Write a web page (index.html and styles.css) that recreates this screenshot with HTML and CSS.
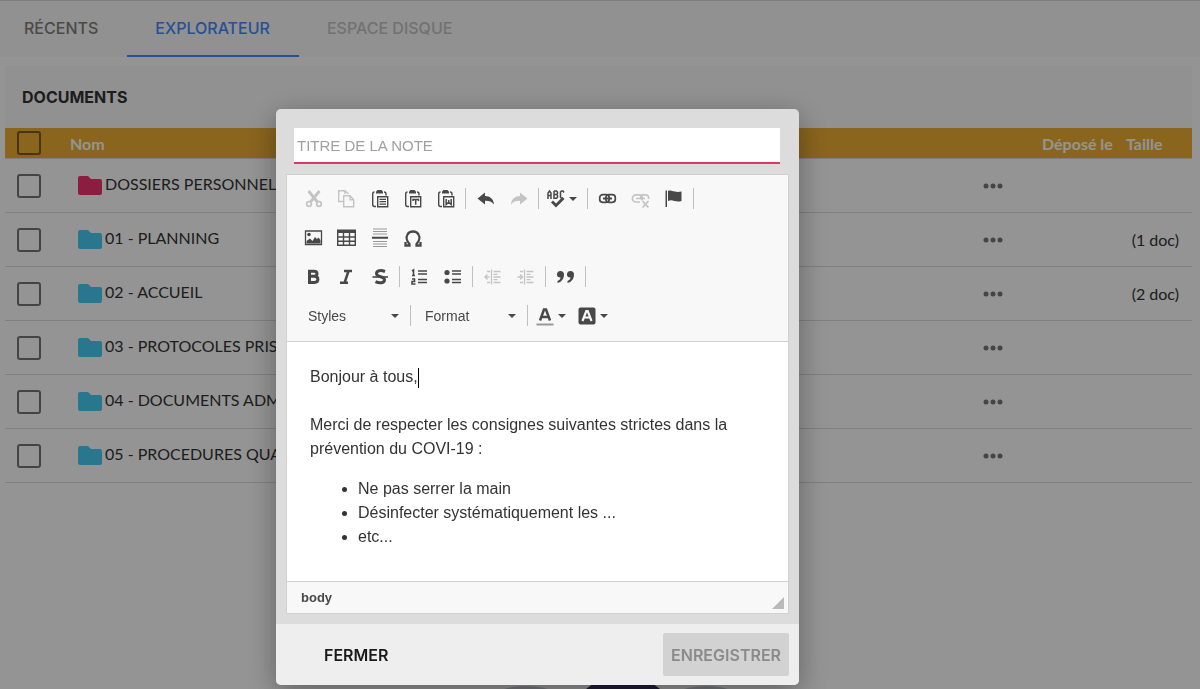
FILE: index.html
```html
<!DOCTYPE html>
<html lang="fr">
  <head>
    <meta charset="UTF-8" />
    <meta name="viewport" content="width=device-width, initial-scale=1.0" />
    <title>Documents</title>
    <link rel="stylesheet" href="styles.css">
  </head>
  <body>
    <svg class="sprite" aria-hidden="true">
      <symbol id="folder" viewBox="0 0 24 20">
        <path d="M2 0h8l3 3h9a2 2 0 0 1 2 2v12a2 2 0 0 1-2 2H2a2 2 0 0 1-2-2V2a2 2 0 0 1 2-2z" />
      </symbol>
      <symbol id="dots" viewBox="0 0 20 6">
        <circle cx="3" cy="3" r="2.5" /><circle cx="10" cy="3" r="2.5" /><circle cx="17" cy="3" r="2.5" />
      </symbol>
      <symbol id="clipboard" viewBox="0 0 20 20">
        <path d="M4.500 3C3 3 2.700 3.500 2.700 5v10.500c0 1.500.3 2 1.800 2H6M14 3c1.500 0 2 .5 2 2v1.500" fill="none" stroke="currentColor" stroke-width="1.400" />
        <path d="M6 4.500V2.800L7.500 1h4L13 2.800v1.700z" />
        <path d="M7.700 7.700h10v10h-10z" fill="#f8f8f8" stroke="currentColor" stroke-width="1.400" />
      </symbol>
    </svg>

    <nav class="tabs">
      <a class="tab" href="#">RÉCENTS</a>
      <a class="tab active" href="#">EXPLORATEUR</a>
      <a class="tab disabled" href="#">ESPACE DISQUE</a>
    </nav>

    <main class="panel">
      <h1>DOCUMENTS</h1>
      <table class="files">
        <thead>
          <tr>
            <th class="col-check"><input type="checkbox" aria-label="Tout sélectionner" /></th>
            <th>Nom</th>
            <th class="col-menu"></th>
            <th class="col-date">Déposé le</th>
            <th class="col-size">Taille</th>
          </tr>
        </thead>
        <tbody>
          <tr>
            <td><input type="checkbox" id="f0" /></td>
            <td><label class="file personal" for="f0"><svg><use href="#folder" /></svg><span>DOSSIERS PERSONNELS</span></label></td>
            <td class="col-menu"><button aria-label="Actions"><svg><use href="#dots" /></svg></button></td>
            <td></td>
            <td class="size"></td>
          </tr>
          <tr>
            <td><input type="checkbox" id="f1" /></td>
            <td><label class="file" for="f1"><svg><use href="#folder" /></svg><span>01 - PLANNING</span></label></td>
            <td class="col-menu"><button aria-label="Actions"><svg><use href="#dots" /></svg></button></td>
            <td></td>
            <td class="size">(1 doc)</td>
          </tr>
          <tr>
            <td><input type="checkbox" id="f2" /></td>
            <td><label class="file" for="f2"><svg><use href="#folder" /></svg><span>02 - ACCUEIL</span></label></td>
            <td class="col-menu"><button aria-label="Actions"><svg><use href="#dots" /></svg></button></td>
            <td></td>
            <td class="size">(2 doc)</td>
          </tr>
          <tr>
            <td><input type="checkbox" id="f3" /></td>
            <td><label class="file" for="f3"><svg><use href="#folder" /></svg><span>03 - PROTOCOLES PRIS</span></label></td>
            <td class="col-menu"><button aria-label="Actions"><svg><use href="#dots" /></svg></button></td>
            <td></td>
            <td class="size"></td>
          </tr>
          <tr>
            <td><input type="checkbox" id="f4" /></td>
            <td><label class="file" for="f4"><svg><use href="#folder" /></svg><span>04 - DOCUMENTS ADMI</span></label></td>
            <td class="col-menu"><button aria-label="Actions"><svg><use href="#dots" /></svg></button></td>
            <td></td>
            <td class="size"></td>
          </tr>
          <tr>
            <td><input type="checkbox" id="f5" /></td>
            <td><label class="file" for="f5"><svg><use href="#folder" /></svg><span>05 - PROCEDURES QUA</span></label></td>
            <td class="col-menu"><button aria-label="Actions"><svg><use href="#dots" /></svg></button></td>
            <td></td>
            <td class="size"></td>
          </tr>
        </tbody>
      </table>
    </main>

    <svg class="illustration" viewBox="0 0 240 8" aria-hidden="true">
      <path d="M82 8l8-6h58l8 6z" fill="#35305a" />
      <path d="M0 8c14-4 30-4 44 0M180 8c14-4 30-4 44 0" fill="#c4cfd4" />
    </svg>

    <div class="overlay">
      <div class="modal" role="dialog" aria-label="Note">
        <div class="modal-body">
          <input class="note-title" type="text" placeholder="TITRE DE LA NOTE" aria-label="Titre de la note" />

          <div class="editor">
            <div class="toolbar">
              <div class="tools">
                <button class="off" title="Couper"><svg viewBox="0 0 20 20"><path d="M4.500 2l9 11M15.500 2l-9 11" fill="none" stroke="currentColor" stroke-width="2.800" /><circle cx="5" cy="15" r="2.300" fill="none" stroke="currentColor" stroke-width="1.800" /><circle cx="15" cy="15" r="2.300" fill="none" stroke="currentColor" stroke-width="1.800" /></svg></button>
                <button class="off" title="Copier"><svg viewBox="0 0 20 20"><path d="M6 12.500H1.700V1.700H8L11.500 5M8 1.700V5" fill="none" stroke="currentColor" stroke-width="1.400" /><path d="M6.700 6.700H13l3.700 4v7h-10zM13 6.700v4h4" fill="none" stroke="currentColor" stroke-width="1.400" /></svg></button>
                <button title="Coller"><svg viewBox="0 0 20 20"><use href="#clipboard" /><path d="M9.500 10.300h6.500M9.500 12.700h6.500M9.500 15.100h6.500" stroke="currentColor" stroke-width="1.300" /></svg></button>
                <button title="Coller comme texte"><svg viewBox="0 0 20 20"><use href="#clipboard" /><path d="M10 12v-1.500h5.500V12M12.700 10.500v5.300" fill="none" stroke="currentColor" stroke-width="1.500" /></svg></button>
                <button title="Coller depuis Word"><svg viewBox="0 0 20 20"><use href="#clipboard" /><path d="M10.200 10v5.500l2.500-2.300 2.500 2.300V10M12.700 11v3" fill="none" stroke="currentColor" stroke-width="1.500" /></svg></button>
                <span class="sep"></span>
                <button title="Annuler"><svg viewBox="0 0 20 20"><path d="M1.500 9.500L9 3.500v3.600c5 0 8.500 2.900 9 8.400-2.200-3-5-3.800-9-3.700v3.700z" /></svg></button>
                <button class="off" title="Rétablir"><svg viewBox="0 0 20 20"><path d="M18.500 9.500L11 3.500v3.600c-5 0-8.500 2.900-9 8.400 2.200-3 5-3.800 9-3.700v3.700z" /></svg></button>
                <span class="sep"></span>
                <button class="menu" title="Orthographe"><svg viewBox="0 0 20 20"><path d="M2 10V4l1.500-2L5 4v6M2 6.500h3M8 2v7.300h2.500l1-1V6.500l-1-1H8h2.500l1-1V3l-1-1H8M18 3.500L17 2h-1.500l-1 1v5.300l1 1H17" fill="none" stroke="currentColor" stroke-width="1.500" /><path d="M6 12.500l4 4L17.500 9" fill="none" stroke="currentColor" stroke-width="2.800" /></svg></button>
                <span class="sep"></span>
                <button title="Lien"><svg viewBox="0 0 20 20"><rect x="1.700" y="5.700" width="9.500" height="7.600" rx="3" fill="none" stroke="currentColor" stroke-width="1.700" /><rect x="7.800" y="5.700" width="9.500" height="7.600" rx="3" fill="none" stroke="currentColor" stroke-width="1.700" /><path d="M5 9.500h9" stroke="currentColor" stroke-width="1.800" /></svg></button>
                <button class="off" title="Supprimer le lien"><svg viewBox="0 0 20 20"><path d="M9 13H5a3.500 3.500 0 0 1 0-7.200h3c4 0 4 4.500 2 5.200M10 9c-1-1.500 0-3.200 2-3.200h2.500c2.500 0 3.500 2 3 4.200M5 9.500h9" fill="none" stroke="currentColor" stroke-width="1.700" /><path d="M11.500 12l6 6.500M17.500 12l-6 6.500" stroke="currentColor" stroke-width="1.800" /></svg></button>
                <button title="Ancre"><svg viewBox="0 0 20 20"><path d="M1.500 1.500H3V18H1.500zM4 2c4-1.500 5.500 2 13.500.5V12C11 14 9 9.500 4 12z" /></svg></button>
                <span class="sep"></span>
              </div>
              <div class="tools">
                <button title="Image"><svg viewBox="0 0 20 20"><path d="M1.500 3h16v13.500h-16z" fill="none" stroke="currentColor" stroke-width="1.300" /><circle cx="5" cy="6.500" r="1.800" /><path d="M2.500 15.500V13l3.500-2.500L8.500 13l2.500-4 2 2 1.500-1.500 2 2.500v3.500z" /></svg></button>
                <button title="Tableau"><svg viewBox="0 0 20 20"><path d="M0 1.500h19V5H0z" /><path d="M.7 2v15.300h17.600V2M1 9h17.500M1 13.200h17.500M6.500 5v12.500M12.500 5v12.500" fill="none" stroke="currentColor" stroke-width="1.400" /></svg></button>
                <button title="Ligne horizontale"><svg viewBox="0 0 20 20"><path d="M3 1h14M3 3.500h14M3 6h14M3 13.500h14M3 16h14M3 18.500h14" stroke="#999" stroke-width="1.200" /><path d="M2 9.800h16" stroke="currentColor" stroke-width="2" /></svg></button>
                <button title="Caractère spécial"><svg viewBox="0 0 20 20"><path d="M2.500 14v3.500h4V16C3.500 13 3 9 4.500 6.500c2-4 9-4 11 0C17 9 16.500 13 13.500 16v1.500h4V14" fill="none" stroke="currentColor" stroke-width="2.300" /></svg></button>
              </div>
              <div class="tools">
                <button title="Gras"><svg viewBox="0 0 20 20"><path d="M5.500 4.200H10c4 0 4 5 0 5H5.500h5c4.500 0 4.500 6.300 0 6.300h-5z" fill="none" stroke="currentColor" stroke-width="3" /></svg></button>
                <button title="Italique"><svg viewBox="0 0 20 20"><path d="M7 4h8M3 15.800h8M11.500 4L7.500 16" fill="none" stroke="currentColor" stroke-width="2.500" /></svg></button>
                <button title="Barré"><svg viewBox="0 0 20 20"><path d="M15 4.500C11 3 6.500 3.300 6.500 6.500c0 4 8 2.500 8 6.200 0 3.500-5 3.800-9 2" fill="none" stroke="currentColor" stroke-width="3" /><path d="M2.500 10h15.500" stroke="currentColor" stroke-width="1.600" /></svg></button>
                <span class="sep"></span>
                <button title="Liste numérotée"><svg viewBox="0 0 20 20"><path d="M2 4l1.500-1v6M2 8.500h3M2 12h2.500v2.500H2V17h3.500" fill="none" stroke="currentColor" stroke-width="1.600" /><path d="M8 4h9M8 7h9M8 12.500h9M8 15.500h9" stroke="currentColor" stroke-width="1.400" /></svg></button>
                <button title="Liste à puces"><svg viewBox="0 0 20 20"><circle cx="4" cy="5.500" r="2.600" /><circle cx="4" cy="14" r="2.600" /><path d="M9 4h9M9 7h9M9 12.500h9M9 15.500h9" stroke="currentColor" stroke-width="1.400" /></svg></button>
                <span class="sep"></span>
                <button class="off" title="Diminuer le retrait"><svg viewBox="0 0 20 20"><path d="M1.500 10h5M4.500 7.500L2 10l2.500 2.500M8.500 2.500v15M10.500 4.500h7M10.500 7.300h4M10.500 10h7M10.500 12.700h4M10.500 15.500h7M4 4.500h3M4 15.500h3" fill="none" stroke="currentColor" stroke-width="1.300" /></svg></button>
                <button class="off" title="Augmenter le retrait"><svg viewBox="0 0 20 20"><path d="M1.500 10h5M4 7.500L6.500 10 4 12.500M8.500 2.500v15M10.500 4.500h7M10.500 7.300h4M10.500 10h7M10.500 12.700h4M10.500 15.500h7M4 4.500h3M4 15.500h3" fill="none" stroke="currentColor" stroke-width="1.300" /></svg></button>
                <span class="sep"></span>
                <button title="Citation"><svg viewBox="0 0 20 20"><path d="M4.500 4a3.300 3.300 0 0 1 3.500 3.500C8 12 5.500 15 1.500 16v-2c2-.8 3-2 3-3.500-5 0-4.500-6.500 0-6.500zM14.500 4A3.300 3.300 0 0 1 18 7.500c0 4.500-2.500 7.500-6.500 8.500v-2c2-.8 3-2 3-3.500-5 0-4.500-6.500 0-6.500z" /></svg></button>
                <span class="sep"></span>
              </div>
              <div class="tools">
                <span class="combo"><select aria-label="Styles"><option>Styles</option></select></span>
                <span class="sep"></span>
                <span class="combo"><select aria-label="Format"><option>Format</option></select></span>
                <span class="sep"></span>
                <button class="menu" title="Couleur du texte"><svg viewBox="0 0 20 20"><path d="M5 14.500l4-11h2l4 11M6.500 11h7" fill="none" stroke="currentColor" stroke-width="2.500" /><path d="M1.500 18.500h17" stroke="#999" stroke-width="2" /></svg></button>
                <button class="menu" title="Couleur d'arrière-plan"><svg viewBox="0 0 20 20"><rect x="1.500" y="1.500" width="17" height="17" rx="2" /><path d="M5.500 15L9.300 5h1.400l3.800 10M7 11.500h6" fill="none" stroke="#f8f8f8" stroke-width="2.200" /></svg></button>
              </div>
            </div>

            <div class="content" contenteditable="true" role="textbox" aria-label="Contenu de la note">
              <p>Bonjour à tous,<span class="cursor"></span><br /><br />Merci de respecter les consignes suivantes strictes dans la prévention du COVI-19 :</p>
              <ul>
                <li>Ne pas serrer la main</li>
                <li>Désinfecter systématiquement les ...</li>
                <li>etc...</li>
              </ul>
            </div>

            <div class="path">
              <span>body</span>
              <span class="resizer"></span>
            </div>
          </div>
        </div>

        <div class="modal-footer">
          <button class="btn">FERMER</button>
          <button class="btn save" disabled>ENREGISTRER</button>
        </div>
      </div>
    </div>
  </body>
</html>
```

FILE: styles.css
```css
* {
  box-sizing: border-box;
}

body {
  margin: 0;
  min-height: 100vh;
  overflow: hidden;
  background-color: #fff;
  color: #333;
  font-family: Inter, "Liberation Sans", sans-serif;
  font-size: 16px;
}

button {
  border: 0;
  padding: 0;
  background: none;
  font: inherit;
  cursor: pointer;
}

svg {
  display: block;
  fill: currentColor;
}

.sprite {
  position: absolute;
  width: 0;
  height: 0;
}

/* tabs */
.tabs {
  display: flex;
  height: 57px;
  border-top: 1px solid #d8d8d8;
  background-color: #fafafa;
}

.tab {
  display: flex;
  align-items: center;
  padding: 0 29px 0 28px;
  border-bottom: 2px solid transparent;
  color: #808080;
  font-weight: 500;
  text-decoration: none;
}

.tab:first-child {
  padding-left: 24px;
}

.tab.active {
  border-color: #448aff;
  color: #448aff;
}

.tab.disabled {
  color: #c4c4c4;
}

/* documents */
.panel {
  margin: 9px 8px 0 5px;
}

.panel h1 {
  margin: 0;
  padding: 0 17px;
  background-color: #fafafa;
  color: #333;
  font-size: 16px;
  font-weight: 700;
  line-height: 62px;
}

.files {
  width: 100%;
  border-collapse: separate;
  border-spacing: 0;
  table-layout: fixed;
  font-family: Lato, "Liberation Sans", sans-serif;
}

.files th,
.files td {
  height: 54px;
  padding: 0;
  border-bottom: 1px solid #dcdcdc;
  text-align: left;
}

.files th {
  height: 31px;
  background-color: #ecae35;
  color: #fff;
  font-weight: 700;
}

.files .col-check {
  width: 65px;
}

.files .col-menu {
  width: 98px;
}

.files .col-date {
  width: 84px;
}

.files .col-size {
  width: 66px;
}

.files .size {
  padding-right: 13px;
  text-align: right;
  white-space: nowrap;
}

.files input {
  display: block;
  appearance: none;
  width: 24px;
  height: 24px;
  margin: 0 0 0 12px;
  border: 2px solid #757575;
  border-radius: 3px;
}

.files th input {
  border-color: #7a5a1c;
}

.file {
  display: flex;
  align-items: center;
  gap: 3px;
  padding-left: 8px;
}

.file svg {
  flex: none;
  width: 24px;
  height: 20px;
  color: #48cbf6;
}

.file.personal svg {
  color: #f0356e;
}

.file span {
  padding-bottom: 4px;
}

.col-menu button {
  display: block;
  margin: 0 auto;
  color: #777;
}

.col-menu svg {
  width: 20px;
  height: 6px;
}

.illustration {
  position: absolute;
  bottom: 0;
  left: 42%;
  width: 240px;
  height: 8px;
}

/* note dialog */
.overlay {
  position: fixed;
  inset: 0;
  background-color: rgba(0, 0, 0, 0.42);
}

.modal {
  width: 523px;
  max-width: 100%;
  margin: 109px 0 0 23%;
  border-radius: 5px;
  background-color: #dcdcdc;
  box-shadow: 0 8px 30px rgba(0, 0, 0, 0.35);
  overflow: hidden;
}

.modal-body {
  padding: 19px 10px 10px;
}

.note-title {
  display: block;
  width: calc(100% - 17px);
  height: 36px;
  margin: 0 9px 10px 8px;
  padding: 0 3px;
  border: 0;
  border-bottom: 2px solid #e0356b;
  border-radius: 0;
  outline: 0;
  font-family: "Liberation Sans", Arial, sans-serif;
  font-size: 15px;
}

.note-title::placeholder {
  color: #a0a0a0;
}

.editor {
  border: 1px solid #d1d1d1;
  background-color: #fff;
  font-family: "Liberation Sans", Arial, sans-serif;
}

.toolbar {
  padding: 4px 10px 6px;
  border-bottom: 1px solid #d1d1d1;
  background-color: #f8f8f8;
}

.tools {
  display: flex;
  align-items: center;
  height: 39px;
}

.tools button {
  display: flex;
  align-items: center;
  justify-content: center;
  width: 33px;
  height: 32px;
  color: #484848;
}

.tools svg {
  width: 20px;
  height: 20px;
}

.tools .off {
  color: #c4c4c4;
}

.tools .menu {
  justify-content: flex-start;
  gap: 3px;
  width: 42px;
  padding-left: 4px;
}

.menu::after,
.combo::after {
  content: "";
  border: 4px solid transparent;
  border-top-color: #484848;
  border-bottom: 0;
}

.sep {
  width: 1px;
  height: 21px;
  margin: 0 3px;
  background-color: #c0c0c0;
}

.combo {
  display: flex;
  align-items: center;
  width: 110px;
  padding: 0 8px 0 11px;
}

.combo select {
  flex: 1;
  appearance: none;
  padding: 0;
  border: 0;
  background: none;
  color: #484848;
  font-family: inherit;
  font-size: 14px;
}

.content {
  padding: 23px 23px 32px;
  outline: 0;
  line-height: 24px;
}

.content p {
  margin: 0 0 16px;
}

.content ul {
  margin: 0;
  padding-left: 48px;
}

.cursor {
  display: inline-block;
  width: 1px;
  height: 20px;
  background-color: #000;
  vertical-align: middle;
}

.path {
  display: flex;
  align-items: center;
  justify-content: space-between;
  height: 32px;
  padding: 0 4px 0 14px;
  border-top: 1px solid #d1d1d1;
  background-color: #f8f8f8;
  color: #484848;
  font-size: 13px;
  font-weight: bold;
}

.resizer {
  align-self: flex-end;
  margin-bottom: 4px;
  border-bottom: 12px solid #bababa;
  border-left: 12px solid transparent;
}

.modal-footer {
  display: flex;
  align-items: center;
  justify-content: space-between;
  padding: 9px 10px 9px 42px;
  background-color: #eee;
}

.btn {
  height: 43px;
  padding: 0 6px;
  border-radius: 2px;
  color: #1a1a1a;
  font-weight: 600;
}

.save {
  padding: 0 8px;
  background-color: #d2d2d2;
  color: #8a8a8a;
}
```
